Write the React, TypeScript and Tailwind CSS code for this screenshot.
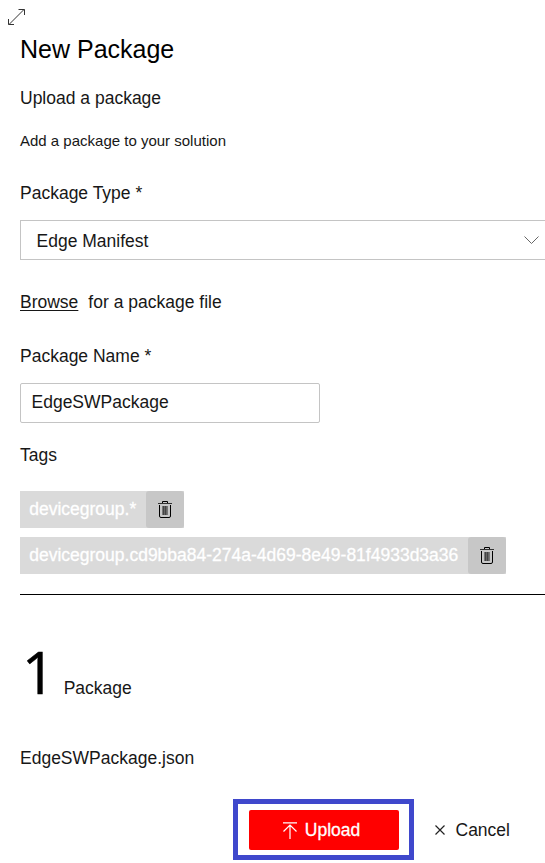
import React from "react";

function TrashIcon() {
  return (
    <svg className="-mt-px" width="14" height="17" viewBox="0 0 14 17" fill="none" stroke="#000">
      <path d="M0 2.5H14" stroke="#333" />
      <path d="M4.5 2V.5H9.5V2" />
      <path d="M1.5 4V15Q1.5 16.5 3 16.5H11Q12.5 16.5 12.5 15V4" />
      <path d="M4.5 5V14M9.5 5V14" stroke="#777" />
      <path d="M5.5 5V14M7.5 5V14" stroke="#444" />
      <path d="M6.5 5V14M8.5 5V14" stroke="#666" />
    </svg>
  );
}

function Tag({ label }: { label: string }) {
  return (
    <div className="flex h-[37px] w-fit bg-[#dadada]">
      <span className="pr-[9.5px] pl-[9.2px] leading-[37px] whitespace-nowrap text-white [-webkit-text-stroke:0.3px_white]">
        {label}
      </span>
      <button className="flex w-[38px] items-center justify-center rounded-[3px] bg-[#c7c7c7]" aria-label="Delete tag">
        <TrashIcon />
      </button>
    </div>
  );
}

export default function App() {
  return (
    <main className="flex h-[863px] w-[545px] flex-col overflow-hidden bg-white pl-5 font-['Liberation_Sans',Arial,sans-serif] text-[17.5px] leading-5 text-[#171717]">
      <div className="-ml-3 h-9 pt-[9px]">
        <svg width="18" height="17" viewBox="0 0 18 17" fill="none" stroke="#333">
          <path d="M1 15.5L16 .5M10.5 .5H16.5V6M.5 10V15.5H6" />
        </svg>
      </div>
      <h1 className="h-[52px] text-[25px] leading-[27px] text-black">New Package</h1>
      <h2 className="h-[43px]">Upload a package</h2>
      <p className="h-[52px] text-[15px]">Add a package to your solution</p>
      <label className="h-[37px]">Package Type *</label>
      <div className="flex h-10 items-center justify-between border border-r-0 border-[#c4c4c4] pr-[6px] pl-[15.5px]">
        <span className="pt-[2px]">Edge Manifest</span>
        <svg width="15" height="9" viewBox="0 0 15 9" fill="none" stroke="#666">
          <path d="M.5 .5L7.5 7.5L14.5 .5" />
        </svg>
      </div>
      <div className="mt-8 flex h-[54px] gap-[10px]">
        <a className="h-5 underline decoration-1 underline-offset-2">Browse</a>
        <span>for a package file</span>
      </div>
      <label className="h-[37px]">Package Name *</label>
      <div className="h-10 w-[300px] rounded-[2px] border border-[#c4c4c4] pl-[10.5px] leading-[37px]">
        EdgeSWPackage
      </div>
      <div className="mt-[22px] h-[46px]">Tags</div>
      <div className="flex h-[104px] flex-col gap-[9px] border-b border-black">
        <Tag label="devicegroup.*" />
        <Tag label="devicegroup.cd9bba84-274a-4d69-8e49-81f4933d3a36" />
      </div>
      <div className="mt-[42px] flex h-[111px] items-baseline gap-[8.5px]">
        <span className="pl-[2px] font-['Open_Sans','Noto_Sans',sans-serif] text-[58px] leading-[70px] text-black [-webkit-text-stroke:0.5px_black]">1</span>
        <span>Package</span>
      </div>
      <div className="h-[51px]">EdgeSWPackage.json</div>
      <div className="ml-[213px] flex items-center">
        <div className="h-[61px] w-[181px] border-[5px] border-[#3f48cc] px-[11px] py-[6px]">
          <button className="flex h-10 w-[150px] items-center justify-center gap-2 rounded-[2px] bg-[#f00] pr-[5px] text-white [-webkit-text-stroke:0.3px_white]">
            <svg width="14" height="17" viewBox="0 0 14 17" fill="none" stroke="white" strokeWidth="1.2">
              <path d="M0 .8H14M7 17V3M.5 9.5L7 3L13.5 9.5" />
            </svg>
            Upload
          </button>
        </div>
        <button className="ml-[21px] flex items-center gap-[10.5px]">
          <svg width="10" height="10" viewBox="0 0 10 10" fill="none" stroke="#222" strokeWidth="1.2">
            <path d="M.5 .5L9.5 9.5M9.5 .5L.5 9.5" />
          </svg>
          Cancel
        </button>
      </div>
    </main>
  );
}
